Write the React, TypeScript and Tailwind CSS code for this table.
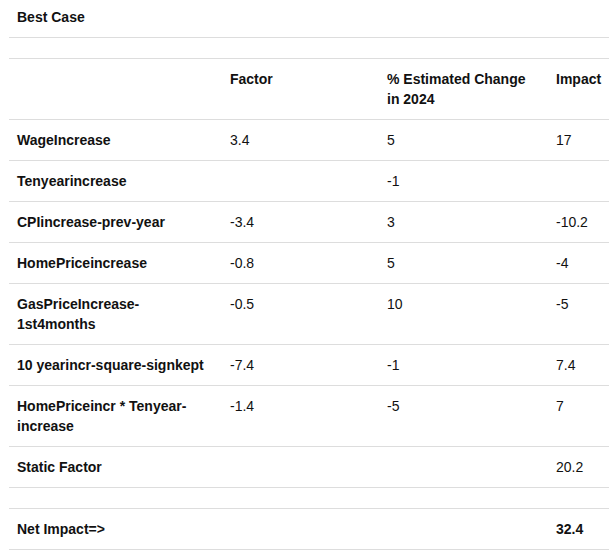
const rows: [string, string, string, string][] = [
  ['WageIncrease', '3.4', '5', '17'],
  ['Tenyearincrease', '', '-1', ''],
  ['CPIincrease-prev-year', '-3.4', '3', '-10.2'],
  ['HomePriceincrease', '-0.8', '5', '-4'],
  ['GasPriceIncrease-1st4months', '-0.5', '10', '-5'],
  ['10 yearincr-square-signkept', '-7.4', '-1', '7.4'],
  ['HomePriceincr * Tenyear-increase', '-1.4', '-5', '7'],
]

const cell = 'px-2 py-[10px] align-top text-left leading-5 border-b border-[#dddddd]'

export default function App() {
  return (
    <div className="min-h-screen bg-white pl-[9px] pr-[7px] text-[14px] text-[#111111] font-['Liberation_Sans',Arial,sans-serif]">
      <table className="w-[600px] table-fixed border-collapse">
        <colgroup>
          <col className="w-[213px]" />
          <col className="w-[157px]" />
          <col className="w-[169px]" />
          <col className="w-[61px]" />
        </colgroup>
        <tbody>
          <tr>
            <td colSpan={4} className="px-2 pt-[7px] pb-[10px] leading-5 font-bold border-b border-[#dddddd]">
              Best Case
            </td>
          </tr>
          <tr>
            <td colSpan={4} className="h-[21px] p-0 border-b border-[#dddddd]"></td>
          </tr>
          <tr className="font-bold">
            <td className={cell}></td>
            <td className={cell}>Factor</td>
            <td className={`${cell} pr-4`}>% Estimated Change in 2024</td>
            <td className={cell}>Impact</td>
          </tr>
          {rows.map(([label, factor, change, impact]) => (
            <tr key={label}>
              <td className={`${cell} font-bold`}>{label}</td>
              <td className={cell}>{factor}</td>
              <td className={cell}>{change}</td>
              <td className={cell}>{impact}</td>
            </tr>
          ))}
          <tr>
            <td className={`${cell} font-bold`}>Static Factor</td>
            <td className={cell}></td>
            <td className={cell}></td>
            <td className={cell}>20.2</td>
          </tr>
          <tr>
            <td colSpan={4} className="h-[21px] p-0 border-b border-[#dddddd]"></td>
          </tr>
          <tr className="font-bold">
            <td className={cell}>Net Impact=&gt;</td>
            <td className={cell}></td>
            <td className={cell}></td>
            <td className={cell}>32.4</td>
          </tr>
        </tbody>
      </table>
    </div>
  )
}
